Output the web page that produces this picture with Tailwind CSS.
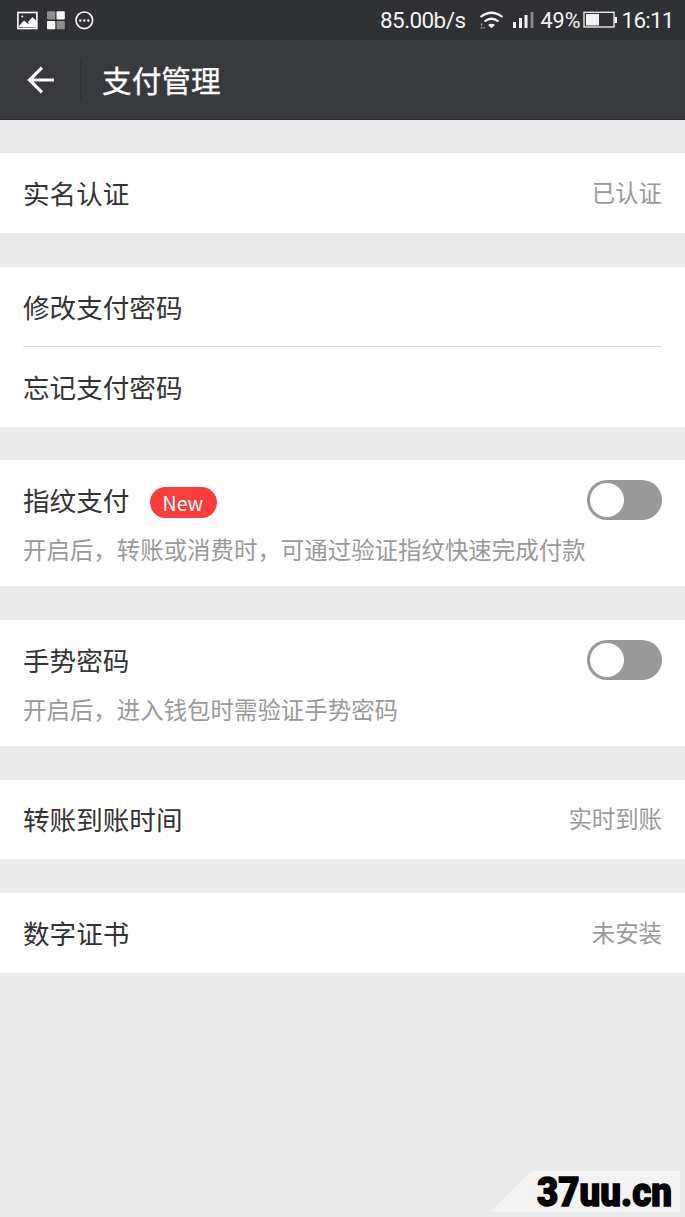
<!DOCTYPE html>
<html lang="zh-CN">
<head>
<meta charset="utf-8">
<title>支付管理</title>
<script src="https://cdn.jsdelivr.net/npm/@tailwindcss/browser@4"></script>
</head>
<body class="relative h-[1217px] w-[685px] bg-[#eaeaea] font-['Roboto','Noto_Sans_CJK_SC',sans-serif] text-[#333]">
<div class="flex h-10 items-center justify-between bg-[#303135] text-white">
  <svg class="h-10 w-[110px]" viewBox="0 0 110 40" fill="none">
    <rect x="17.900" y="12.500" width="19" height="16" stroke="#fff" stroke-width="1.600"/>
    <path d="M19 27v-1l5-5.500 3.500 3 1.500 1-1-2.500 4.500-5 4 4v6.500z" fill="#fff"/><circle cx="22.300" cy="16.500" r="1" fill="#fff"/>
    <rect x="47" y="11.300" width="8.300" height="8.300" rx="1" fill="#8e8f91"/><rect x="56.500" y="11.300" width="8.300" height="8.300" rx="1" fill="#f4f4f4"/>
    <rect x="47" y="21" width="8.300" height="8.300" rx="1" fill="#f4f4f4"/><rect x="56.500" y="21" width="8.300" height="8.300" rx="1" fill="#8e8f91"/>
    <circle cx="84.300" cy="20.300" r="8.300" stroke="#f4f4f4" stroke-width="1.600"/>
    <g fill="#f4f4f4"><circle cx="80.300" cy="20.500" r="1.200"/><circle cx="84.300" cy="20.500" r="1.200"/><circle cx="88.300" cy="20.500" r="1.200"/></g>
  </svg>
  <svg class="h-10 w-[315px]" viewBox="370 0 315 40" fill="none">
    <g fill="#f4f4f4" font-family="Roboto" font-size="22.500">
      <text x="380" y="27.500" textLength="86">85.00b/s</text>
      <text x="540.500" y="27.500" textLength="40" lengthAdjust="spacingAndGlyphs">49%</text>
      <text x="621.500" y="27.500" textLength="53">16:11</text>
    </g>
    <path d="M480.500 17q11-8.500 22 0M484.500 21.500q7-5.500 14 0" stroke="#f4f4f4" stroke-width="2.200"/>
    <path d="M488 25q3.500-2.500 7 0l-3.500 3.200z" fill="#f4f4f4"/><path d="M481.500 23.500v2M481.500 27v1.500M484 27v1.500" stroke="#aaa" stroke-width="1.300"/>
    <g fill="#f4f4f4"><rect x="513" y="22" width="3" height="6"/><rect x="519" y="18" width="3" height="10"/><rect x="524.500" y="15" width="3" height="13"/><rect x="530.500" y="12" width="3" height="16" fill="#85868a"/>
    <rect x="586" y="14" width="13" height="11.500"/><rect x="614.500" y="17" width="2.500" height="6"/></g>
    <rect x="584" y="12.300" width="30" height="14.700" stroke="#f4f4f4" stroke-width="1.300"/>
  </svg>
</div>
<header class="flex h-20 items-center border-b border-[#2b2c2f] bg-[#393a3e] text-white">
  <svg class="h-10 w-20" viewBox="0 60 80 40" fill="none" stroke="#fff" stroke-width="3.200"><path d="M54 80H29.500M42 67.700L29.500 80 42 92.300"/></svg>
  <div class="h-10 w-px bg-[#2f3033]"></div>
  <h1 class="ml-[21px] pt-1 text-[29.7px] leading-none [-webkit-text-stroke:0.3px_white]">支付管理</h1>
</header>
<main class="flex flex-col pt-[33px]">
  <section class="mb-[34px] flex h-20 items-center justify-between bg-white px-[23px] pt-1">
    <span class="text-[26.6px]">实名认证</span><span class="text-[23.4px] text-[#999]">已认证</span>
  </section>
  <section class="mb-[33px] h-40 bg-white px-[23px]">
    <div class="flex h-20 items-center border-b border-[#dedede] pt-1 text-[26.6px]">修改支付密码</div>
    <div class="flex h-20 items-center pt-[3px] text-[26.6px]">忘记支付密码</div>
  </section>
  <section class="mb-[34px] h-[126px] bg-white px-[23px]">
    <div class="flex h-20 items-center justify-between">
      <div class="flex items-center"><span class="pt-1 text-[26.6px]">指纹支付</span><span class="mt-[5px] ml-[21px] flex h-[31px] w-[67px] items-center justify-center rounded-full bg-[#fa3e3b] pr-0.5 font-['Noto_Sans_CJK_SC'] text-[19.5px] leading-none text-white">New</span></div>
      <div class="flex h-10 w-[75px] items-center rounded-full bg-[#999] pl-[3px]"><div class="size-[34px] rounded-full bg-white"></div></div>
    </div>
    <p class="-mt-[5px] text-[23.45px] leading-8 text-[#999]">开启后，转账或消费时，可通过验证指纹快速完成付款</p>
  </section>
  <section class="mb-[34px] h-[126px] bg-white px-[23px]">
    <div class="flex h-20 items-center justify-between">
      <span class="pt-1 text-[26.6px]">手势密码</span>
      <div class="flex h-10 w-[75px] items-center rounded-full bg-[#999] pl-[3px]"><div class="size-[34px] rounded-full bg-white"></div></div>
    </div>
    <p class="-mt-[5px] text-[23.45px] leading-8 text-[#999]">开启后，进入钱包时需验证手势密码</p>
  </section>
  <section class="mb-[34px] flex h-[79px] items-center justify-between bg-white px-[23px] pt-[3px]">
    <span class="text-[26.6px]">转账到账时间</span><span class="text-[23.4px] text-[#999]">实时到账</span>
  </section>
  <section class="flex h-20 items-center justify-between bg-white px-[23px] pt-1">
    <span class="text-[26.6px]">数字证书</span><span class="text-[23.4px] text-[#999]">未安装</span>
  </section>
</main>
<svg class="absolute right-0 bottom-0 h-[57px] w-[205px] overflow-visible" viewBox="480 1160 205 57">
  <path d="M490 1212L531 1171H680V1212z" fill="#f3f3f3"/>
  <text x="537" y="1205.500" font-family="Roboto" font-weight="900" font-size="40" textLength="135" lengthAdjust="spacingAndGlyphs" fill="#000" stroke="#000" stroke-width="1.400">37uu.cn</text>
</svg>
</body>
</html>
